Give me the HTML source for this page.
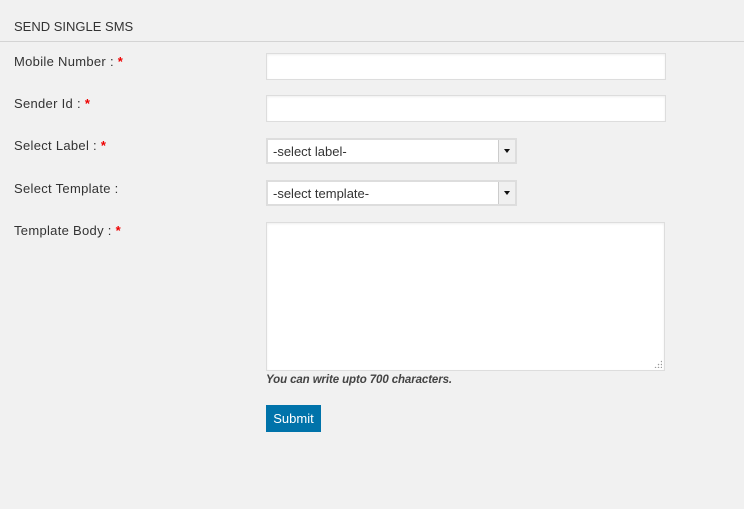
<!DOCTYPE html>
<html><head><style>
body{margin:0;width:744px;height:509px;background:#f1f1f1;font-family:"Liberation Sans",sans-serif;color:#333;font-size:13px;position:relative;overflow:hidden}
.h{position:absolute;left:14px;top:19px;font-size:13px;color:#333}
.hr{position:absolute;left:0;top:41px;width:744px;height:1px;background:#d4d4d4}
.l{position:absolute;left:14px;font-size:13px;color:#333;letter-spacing:0.3px}
.l b{color:#e00;font-weight:bold}
.in{position:absolute;left:266px;background:#fff;border:1px solid #ddd;box-shadow:inset 0 1px 2px rgba(0,0,0,.07);box-sizing:border-box}
.sel{position:absolute;left:266px;width:251px;height:26px;background:#fff;border:2px solid #ddd;box-sizing:border-box;font-size:13px;padding:4px 0 0 5px}
.sel i{position:absolute;right:0;top:0;width:16px;height:22px;background:#f0f0f0;border-left:1px solid #ccc}
.sel i:after{content:"";position:absolute;left:5px;top:9px;border-left:3px solid transparent;border-right:3px solid transparent;border-top:4px solid #111}
.note{position:absolute;left:266px;top:374px;font-style:italic;font-weight:bold;font-size:11.5px;color:#444;letter-spacing:-0.1px}
.btn{position:absolute;left:266px;top:405px;width:55px;height:27px;background:#0073aa;color:#fff;font-size:13px;text-align:center;line-height:27px}
.grip{position:absolute;right:2px;bottom:2px;width:8px;height:8px;background:radial-gradient(circle,#999 0.6px,transparent 0.9px) 0 0/3px 3px;clip-path:polygon(100% 0,100% 100%,0 100%)}
</style></head><body>
<div class="h">SEND SINGLE SMS</div>
<div class="hr"></div>
<div class="l" style="top:54px">Mobile Number : <b>*</b></div>
<div class="in" style="top:53px;width:400px;height:27px"></div>
<div class="l" style="top:96px">Sender Id : <b>*</b></div>
<div class="in" style="top:95px;width:400px;height:27px"></div>
<div class="l" style="top:138px">Select Label : <b>*</b></div>
<div class="sel" style="top:138px">-select label-<i></i></div>
<div class="l" style="top:181px">Select Template :</div>
<div class="sel" style="top:180px">-select template-<i></i></div>
<div class="l" style="top:223px">Template Body : <b>*</b></div>
<div class="in" style="top:222px;width:399px;height:149px"><div class="grip"></div></div>
<div class="note">You can write upto 700 characters.</div>
<div class="btn">Submit</div>
</body></html>
